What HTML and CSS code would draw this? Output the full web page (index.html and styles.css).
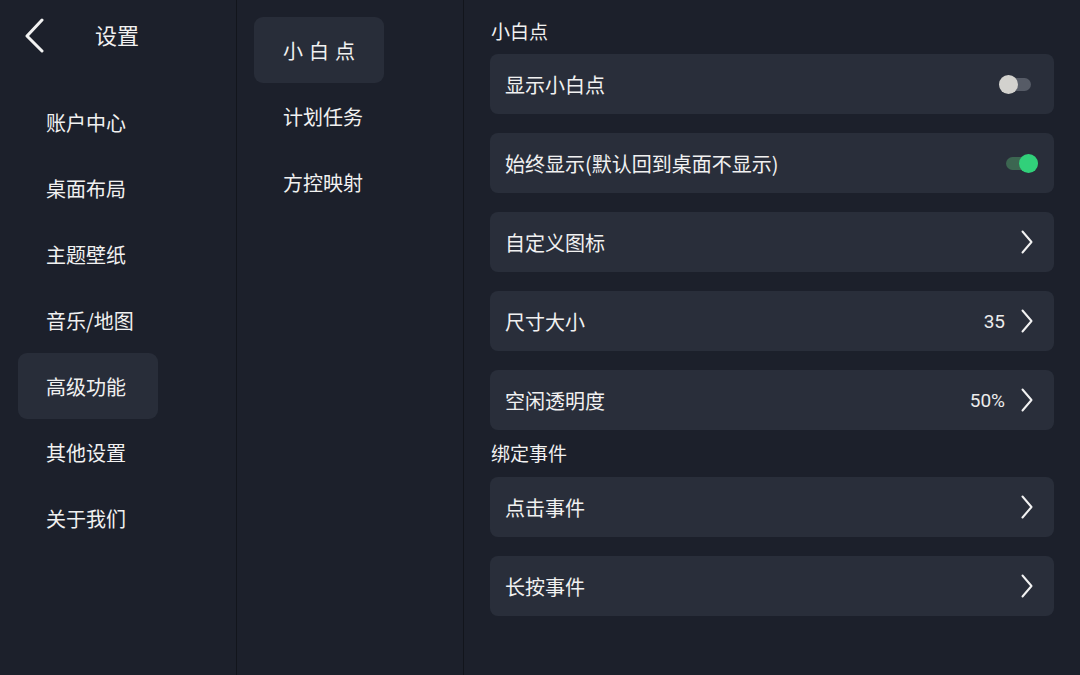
FILE: index.html
```html
<!DOCTYPE html>
<html lang="zh">
<head>
<meta charset="utf-8">
<link rel="stylesheet" href="styles.css">
</head>
<body>
<div class="app">
  <aside class="sidebar">
    <div class="header">
      <svg class="back" width="20" height="36" viewBox="0 0 20 36"><path d="M17 2 L2 18 L17 33" fill="none" stroke="#f2f2f2" stroke-width="3" stroke-linecap="round" stroke-linejoin="round"/></svg>
      <span class="title">设置</span>
    </div>
    <nav class="nav">
      <div class="nav-item">账户中心</div>
      <div class="nav-item">桌面布局</div>
      <div class="nav-item">主题壁纸</div>
      <div class="nav-item">音乐/地图</div>
      <div class="nav-item active">高级功能</div>
      <div class="nav-item">其他设置</div>
      <div class="nav-item">关于我们</div>
    </nav>
  </aside>
  <section class="subnav">
    <div class="sub-item active spaced">小白点</div>
    <div class="sub-item">计划任务</div>
    <div class="sub-item">方控映射</div>
  </section>
  <main class="content">
    <div class="section-title">小白点</div>
    <div class="card">
      <span class="label">显示小白点</span>
      <span class="toggle off"><span class="knob"></span></span>
    </div>
    <div class="card">
      <span class="label">始终显示(默认回到桌面不显示)</span>
      <span class="toggle on"><span class="knob"></span></span>
    </div>
    <div class="card">
      <span class="label">自定义图标</span>
      <span class="right"><svg class="chev" width="12" height="24" viewBox="0 0 12 24"><path d="M1.5 1.5 L10.5 12 L1.5 22.5" fill="none" stroke="#f2f2f2" stroke-width="2" stroke-linecap="round" stroke-linejoin="round"/></svg></span>
    </div>
    <div class="card">
      <span class="label">尺寸大小</span>
      <span class="right"><span class="value">35</span><svg class="chev" width="12" height="24" viewBox="0 0 12 24"><path d="M1.5 1.5 L10.5 12 L1.5 22.5" fill="none" stroke="#f2f2f2" stroke-width="2" stroke-linecap="round" stroke-linejoin="round"/></svg></span>
    </div>
    <div class="card last">
      <span class="label">空闲透明度</span>
      <span class="right"><span class="value">50%</span><svg class="chev" width="12" height="24" viewBox="0 0 12 24"><path d="M1.5 1.5 L10.5 12 L1.5 22.5" fill="none" stroke="#f2f2f2" stroke-width="2" stroke-linecap="round" stroke-linejoin="round"/></svg></span>
    </div>
    <div class="section-title second">绑定事件</div>
    <div class="card">
      <span class="label">点击事件</span>
      <span class="right"><svg class="chev" width="12" height="24" viewBox="0 0 12 24"><path d="M1.5 1.5 L10.5 12 L1.5 22.5" fill="none" stroke="#f2f2f2" stroke-width="2" stroke-linecap="round" stroke-linejoin="round"/></svg></span>
    </div>
    <div class="card">
      <span class="label">长按事件</span>
      <span class="right"><svg class="chev" width="12" height="24" viewBox="0 0 12 24"><path d="M1.5 1.5 L10.5 12 L1.5 22.5" fill="none" stroke="#f2f2f2" stroke-width="2" stroke-linecap="round" stroke-linejoin="round"/></svg></span>
    </div>
  </main>
</div>
</body>
</html>
```

FILE: styles.css
```css
* { box-sizing: border-box; }
html, body {
  margin: 0;
  padding: 0;
  background: #1c202b;
}
body {
  width: 1080px;
  height: 675px;
  overflow: hidden;
  font-family: "Noto Sans CJK SC", "Noto Sans", sans-serif;
  color: #f1f1f1;
}
.app {
  display: flex;
  height: 675px;
}
.sidebar {
  width: 237px;
  flex: none;
  border-right: 1px solid #12151c;
}
.header {
  height: 89px;
  display: flex;
  align-items: flex-start;
  padding-left: 25px;
  padding-top: 18px;
}
.back { display: block; }
.title {
  margin-left: 50px;
  margin-top: -2px;
  font-size: 22px;
  line-height: 36px;
}
.nav {
  display: flex;
  flex-direction: column;
  padding-left: 18px;
}
.nav-item {
  width: 140px;
  height: 66px;
  display: flex;
  align-items: center;
  padding-left: 28px;
  font-size: 20px;
  border-radius: 9px;
}
.nav-item.active,
.sub-item.active {
  background: #282d39;
}
.subnav {
  width: 227px;
  flex: none;
  border-right: 1px solid #12151c;
  padding-top: 17px;
  padding-left: 17px;
  display: flex;
  flex-direction: column;
}
.sub-item {
  width: 130px;
  height: 66px;
  display: flex;
  align-items: center;
  padding-left: 29px;
  font-size: 20px;
  border-radius: 9px;
}
.sub-item.spaced { letter-spacing: 6px; }
.content {
  flex: 1;
  padding: 18px 26px 0 26px;
  display: flex;
  flex-direction: column;
}
.section-title {
  font-size: 19px;
  line-height: 26px;
  padding-left: 1px;
  margin-bottom: 10px;
}
.section-title.second {
  margin-top: 10px;
  margin-bottom: 11px;
}
.card {
  height: 60px;
  flex: none;
  background: #292e3a;
  border-radius: 8px;
  display: flex;
  align-items: center;
  justify-content: space-between;
  padding: 0 21px 0 15px;
  margin-bottom: 19px;
}
.card.last { margin-bottom: 0; }
.label {
  font-size: 20px;
}
.right {
  display: flex;
  align-items: center;
}
.value {
  font-family: Roboto, "Liberation Sans", sans-serif;
  font-size: 19px;
  color: #ececec;
  margin-right: 16px;
}
.chev { display: block; }
.toggle {
  position: relative;
  width: 32px;
  height: 13px;
  border-radius: 7px;
}
.toggle .knob {
  position: absolute;
  top: -3px;
  width: 19px;
  height: 19px;
  border-radius: 50%;
}
.toggle.off {
  background: #565b66;
  margin-right: 2px;
}
.toggle.off .knob {
  left: 0;
  background: #d3d2ce;
}
.toggle.on {
  background: #3c6651;
  margin-right: -5px;
}
.toggle.on .knob {
  right: 0;
  background: #31d07a;
}
```
